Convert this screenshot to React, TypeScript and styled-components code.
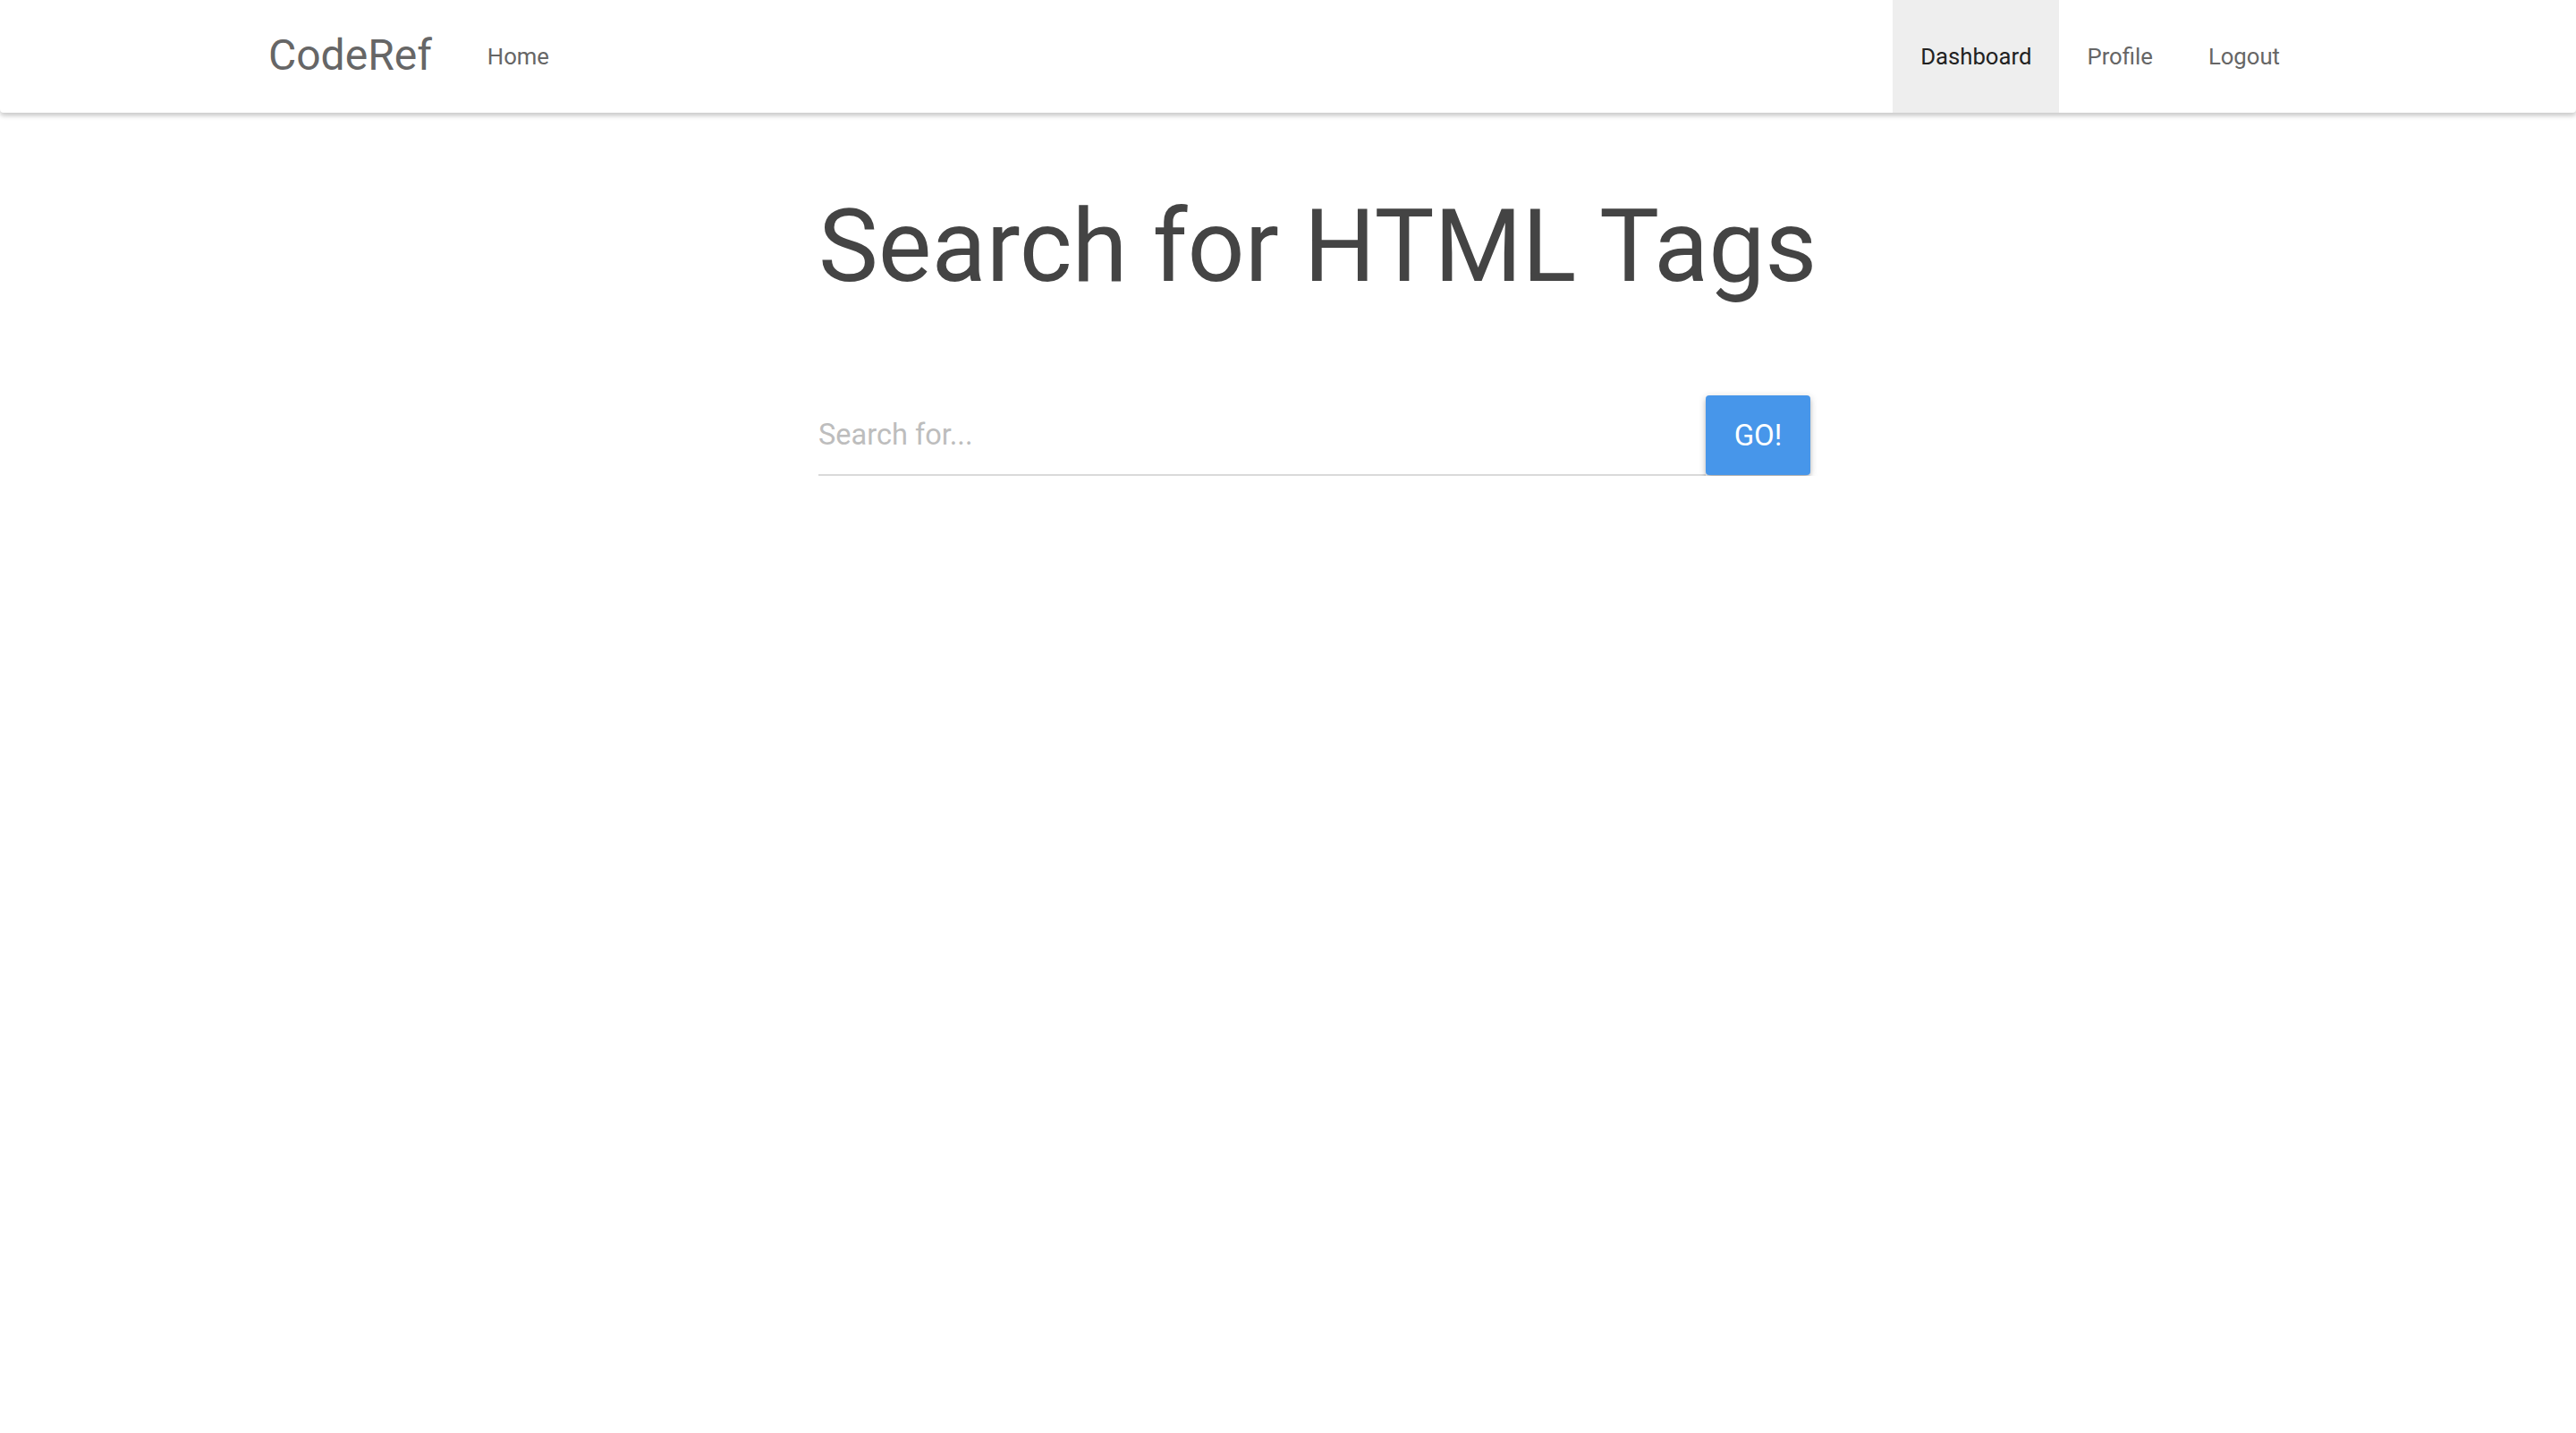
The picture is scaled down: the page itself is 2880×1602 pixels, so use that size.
import styled, { createGlobalStyle } from "styled-components";

const GlobalStyle = createGlobalStyle`
  html, body {
    margin: 0;
    padding: 0;
    background: #fff;
    font-family: Roboto, "Noto Sans", sans-serif;
  }
`;

const navLinks = [
  { label: "Dashboard", active: true },
  { label: "Profile", active: false },
  { label: "Logout", active: false },
];

const Nav = styled.nav`
  height: 126px;
  background: #fff;
  border-radius: 0 0 4px 4px;
  box-shadow: 0 4px 4px 0 rgba(0, 0, 0, 0.12), 0 1px 9px 0 rgba(0, 0, 0, 0.14);
`;

const NavInner = styled.div`
  width: 2280px;
  height: 100%;
  margin: 0 auto;
  display: flex;
  align-items: stretch;
`;

const Brand = styled.a`
  display: flex;
  align-items: center;
  font-size: 48px;
  color: #666;
  margin-right: 31px;
  padding-bottom: 4px;
`;

const LinkList = styled.ul<{ $right?: boolean }>`
  list-style: none;
  margin: 0;
  padding: 0;
  display: flex;
  margin-left: ${(p) => (p.$right ? "auto" : "0")};
`;

const NavLink = styled.li<{ $active?: boolean }>`
  display: flex;
  align-items: center;
  padding: 0 31px;
  font-size: 25.7px;
  color: ${(p) => (p.$active ? "#222" : "#666")};
  background: ${(p) => (p.$active ? "#eee" : "transparent")};
`;

const Main = styled.main`
  width: 1109px;
  margin-left: calc(50% - 525px);
  padding-top: 80px;
`;

const Title = styled.h1`
  margin: 0;
  text-align: center;
  white-space: nowrap;
  font-weight: 400;
  font-size: 112.5px;
  line-height: 140px;
  color: #444;
`;

const SearchRow = styled.div`
  display: flex;
  align-items: stretch;
  margin-top: 96px;
`;

const SearchInput = styled.input`
  flex: 1;
  border: none;
  border-bottom: 2px solid #dadada;
  outline: none;
  padding: 0;
  height: 88px;
  font-family: Roboto, sans-serif;
  font-size: 32.5px;
  color: #444;
  background: transparent;
  &::placeholder {
    color: #bdbdbd;
  }
`;

const GoButton = styled.button`
  width: 117px;
  height: 89px;
  border: none;
  border-radius: 4px;
  background: #4796ea;
  color: #fff;
  font-family: Roboto, sans-serif;
  font-size: 33px;
  box-shadow: 0 4px 4px 0 rgba(0, 0, 0, 0.14), 0 5px 2px -4px rgba(0, 0, 0, 0.12),
    0 2px 9px 0 rgba(0, 0, 0, 0.2);
`;

export default function App() {
  return (
    <>
      <GlobalStyle />
      <Nav>
        <NavInner>
          <Brand>CodeRef</Brand>
          <LinkList>
            <NavLink>Home</NavLink>
          </LinkList>
          <LinkList $right>
            {navLinks.map((l) => (
              <NavLink key={l.label} $active={l.active}>
                {l.label}
              </NavLink>
            ))}
          </LinkList>
        </NavInner>
      </Nav>
      <Main>
        <Title>Search for HTML Tags</Title>
        <SearchRow>
          <SearchInput placeholder="Search for..." />
          <GoButton>GO!</GoButton>
        </SearchRow>
      </Main>
    </>
  );
}
